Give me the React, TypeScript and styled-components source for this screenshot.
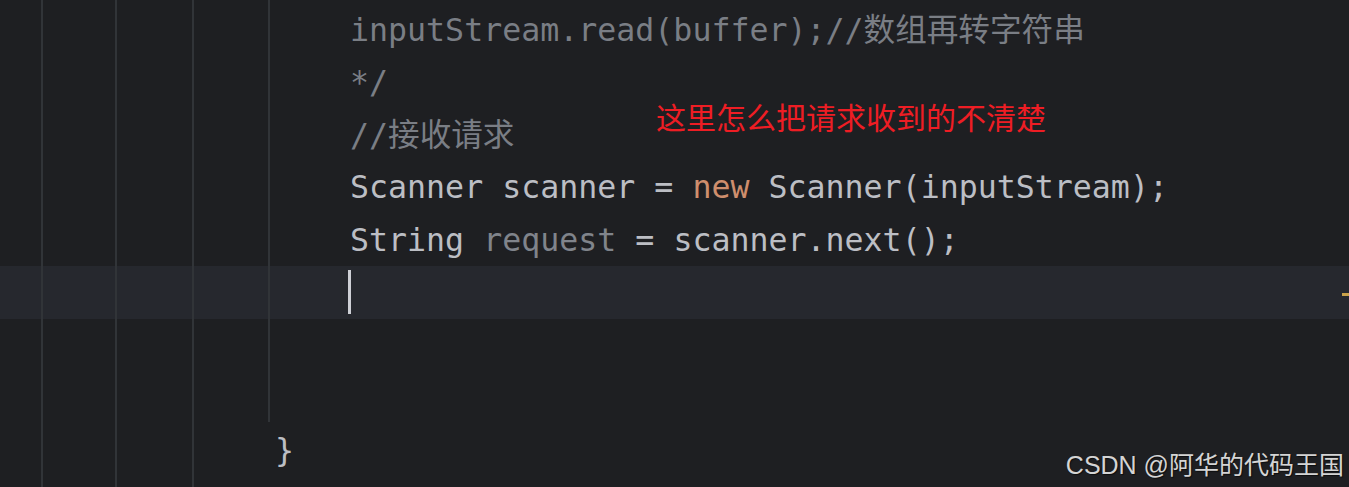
import React from "react";
import styled, { createGlobalStyle } from "styled-components";

const Global = createGlobalStyle`
  html, body { margin: 0; padding: 0; background: #1e1f22; }
  body { width: 1349px; height: 487px; overflow: hidden; }
`;

const GUIDE = "#313438";
const guideX = [41, 115, 192, 268];

const guide = (x: number) =>
  `linear-gradient(to right, transparent ${x}px, ${GUIDE} ${x}px, ${GUIDE} ${x + 2}px, transparent ${x + 2}px)`;

const guides = (n: number) => guideX.slice(0, n).map(guide).join(", ");

const Editor = styled.div`
  position: relative;
  width: 1349px;
  height: 487px;
  background-color: #1e1f22;
  background-image: ${guides(4)};
  background-size: 100% 100%, 100% 100%, 100% 100%, 100% 422px;
  background-repeat: no-repeat;
  padding-top: 3.5px;
  box-sizing: border-box;
  overflow: hidden;
  font-family: "DejaVu Sans Mono", "Noto Sans CJK SC", monospace;
  font-size: 31.6px;
  color: #bcbec4;
`;

const Line = styled.div<{ $current?: boolean; $indent: number }>`
  display: flex;
  align-items: center;
  height: 52.5px;
  padding-left: ${(p) => p.$indent}px;
  background-color: ${(p) => (p.$current ? "#26282e" : "transparent")};
  background-image: ${(p) => (p.$current ? guides(4) : "none")};
  white-space: pre;
  line-height: 52.5px;
`;

const Comment = styled.span`
  color: #7a7e85;
`;

const Keyword = styled.span`
  color: #cf8e6d;
`;

const Unused = styled.span`
  color: #80848b;
`;

const Caret = styled.span`
  display: inline-block;
  width: 3px;
  height: 44px;
  margin-left: -2px;
  background: #ced0d6;
`;

const Annotation = styled.div`
  position: absolute;
  left: 656px;
  top: 96px;
  font-family: "Noto Sans CJK SC", sans-serif;
  font-size: 30px;
  line-height: 40px;
  color: #ee1d24;
  white-space: nowrap;
`;

const Marker = styled.div`
  position: absolute;
  right: 0;
  top: 293px;
  width: 7px;
  height: 3px;
  background: #c9a24a;
`;

const Watermark = styled.div`
  position: absolute;
  right: 5px;
  bottom: 7px;
  font-family: "Liberation Sans", "Noto Sans CJK SC", sans-serif;
  font-size: 25px;
  line-height: 30px;
  color: #d4d4d4;
  text-shadow: 1px 1px 1px rgba(0, 0, 0, 0.6);
  white-space: nowrap;
`;

export default function App() {
  return (
    <>
      <Global />
      <Editor>
        <Line $indent={350}>
          <Comment>inputStream.read(buffer);//数组再转字符串</Comment>
        </Line>
        <Line $indent={350}>
          <Comment>*/</Comment>
        </Line>
        <Line $indent={350}>
          <Comment>//接收请求</Comment>
        </Line>
        <Line $indent={350}>
          Scanner scanner = <Keyword>new</Keyword> Scanner(inputStream);
        </Line>
        <Line $indent={350}>
          String <Unused>request</Unused> = scanner.next();
        </Line>
        <Line $indent={350} $current>
          <Caret />
        </Line>
        <Line $indent={350} />
        <Line $indent={350} />
        <Line $indent={275}>{"}"}</Line>
        <Annotation>这里怎么把请求收到的不清楚</Annotation>
        <Marker />
        <Watermark>CSDN @阿华的代码王国</Watermark>
      </Editor>
    </>
  );
}
